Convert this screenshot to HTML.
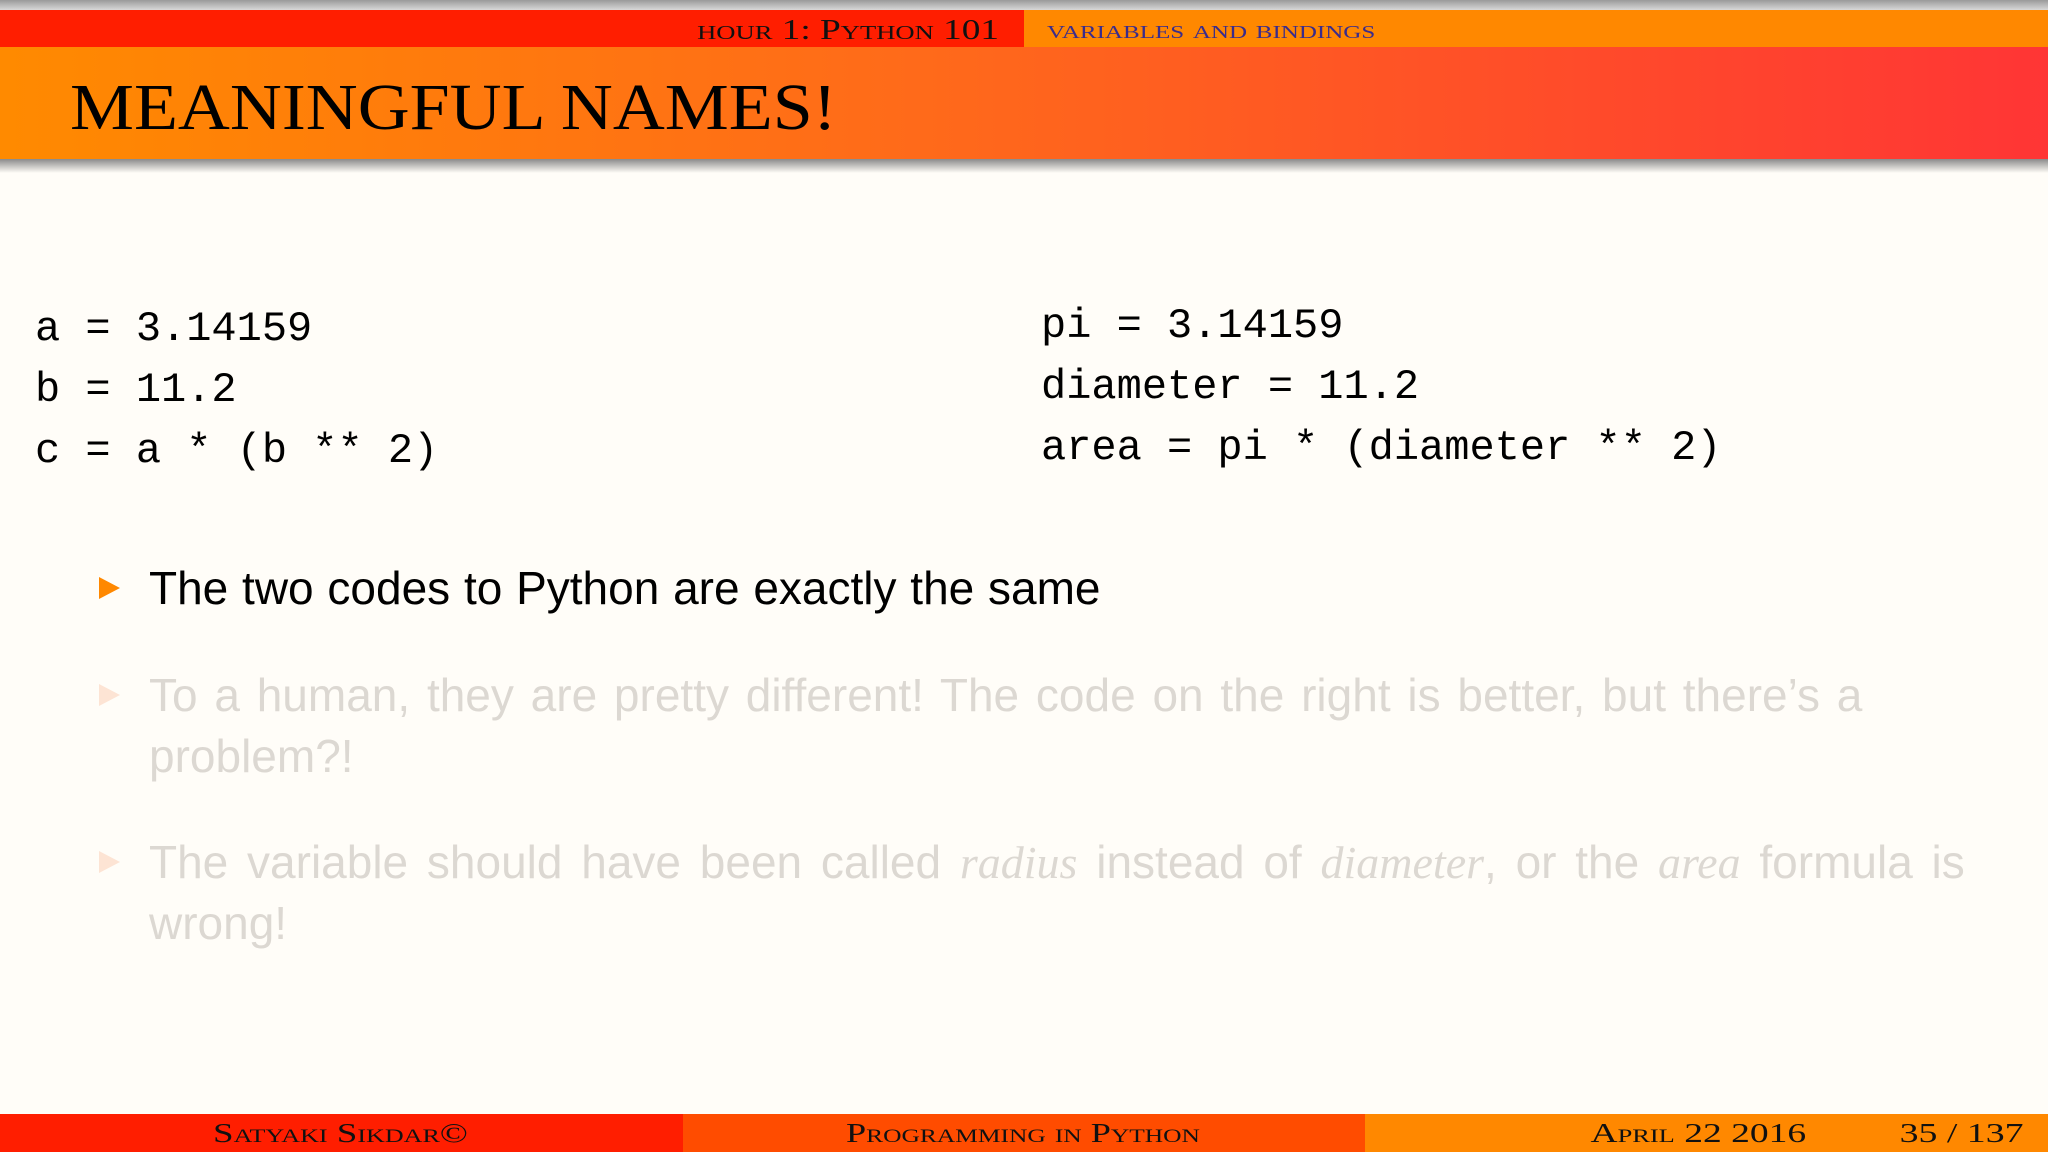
<!DOCTYPE html>
<html><head><meta charset="utf-8"><style>
*{margin:0;padding:0}
body{width:2048px;height:1152px;overflow:hidden;background:#fffdf8;position:relative;font-family:"Liberation Serif",serif}
.abs{position:absolute;white-space:nowrap}
.top{position:absolute;left:0;top:0;width:2048px;height:10px;background:linear-gradient(#9a9a9a,#d8d8d8)}
.hl{position:absolute;left:0;top:10px;width:1024px;height:37px;background:#ff1e00}
.hr{position:absolute;left:1024px;top:10px;width:1024px;height:37px;background:#ff8800}
.title{position:absolute;left:0;top:47px;width:2048px;height:112px;background:linear-gradient(90deg,#ff8a00,#ff6a1a 45%,#ff3535)}
.shadow{position:absolute;left:0;top:159px;width:2048px;height:14px;background:linear-gradient(#8a8a8a,#fffdf8)}
.sc{font-variant:small-caps}
.code{font-family:"Liberation Mono",monospace;font-size:42px;color:#000}
.txt{font-family:"Liberation Sans",sans-serif;font-size:46px;word-spacing:1px}
.tri{position:absolute;width:0;height:0;border-top:11px solid transparent;border-bottom:11px solid transparent;border-left:21px solid #ff8800}
.fb{position:absolute;top:1114px;height:38px;width:683px}
.ft{position:absolute;top:1114px;font-size:27px;line-height:38px;font-variant:small-caps;white-space:nowrap;color:#111}
</style></head><body>
<div class="top"></div>
<div class="hl"></div><div class="hr"></div>
<div class="abs sc" style="right:1049px;top:12px;font-size:28px;line-height:37px;color:#111;transform:scaleX(1.33);transform-origin:right">hour 1: Python 101</div>
<div class="abs sc" style="left:1047px;top:12px;font-size:25px;line-height:37px;color:#3a2c8c;transform:scaleX(1.39);transform-origin:left">variables and bindings</div>
<div class="title"></div>
<div class="abs" style="left:70px;top:68px;font-size:66px;line-height:80px;color:#000;transform:scaleX(1.09);transform-origin:left">MEANINGFUL NAMES!</div>
<div class="shadow"></div>

<div class="abs code" style="left:35px;top:299px;line-height:61px">a = 3.14159<br>b = 11.2<br>c = a * (b ** 2)</div>
<div class="abs code" style="left:1041px;top:296px;line-height:61px">pi = 3.14159<br>diameter = 11.2<br>area = pi * (diameter ** 2)</div>

<div class="tri" style="left:99px;top:577px"></div>
<div class="abs txt" style="left:149px;top:561px;color:#000">The two codes to Python are exactly the same</div>

<div class="tri" style="left:99px;top:684px;border-left-color:#fde4d4"></div>
<div class="abs txt" style="left:149px;top:665px;line-height:61px;color:#dcd8d2;word-spacing:4px">To a human, they are pretty different! The code on the right is better, but there’s a<br>problem?!</div>

<div class="tri" style="left:99px;top:851px;border-left-color:#fde4d4"></div>
<div class="abs txt" style="left:149px;top:832px;line-height:61px;color:#dcd8d2;word-spacing:6px">The variable should have been called <i style="font-family:'Liberation Serif',serif">radius</i> instead of <i style="font-family:'Liberation Serif',serif">diameter</i>, or the <i style="font-family:'Liberation Serif',serif">area</i> formula is<br>wrong!</div>

<div class="fb" style="left:0;background:#ff1e00"></div>
<div class="fb" style="left:683px;background:#ff4c00"></div>
<div class="fb" style="left:1365px;background:#ff8800"></div>
<div class="ft" style="left:213px;transform:scaleX(1.37);transform-origin:left">Satyaki Sikdar©</div>
<div class="ft" style="left:846px;transform:scaleX(1.34);transform-origin:left">Programming in Python</div>
<div class="ft" style="right:242px;transform:scaleX(1.39);transform-origin:right">April 22 2016</div>
<div class="ft" style="right:24px;transform:scaleX(1.4);transform-origin:right">35 / 137</div>
</body></html>
